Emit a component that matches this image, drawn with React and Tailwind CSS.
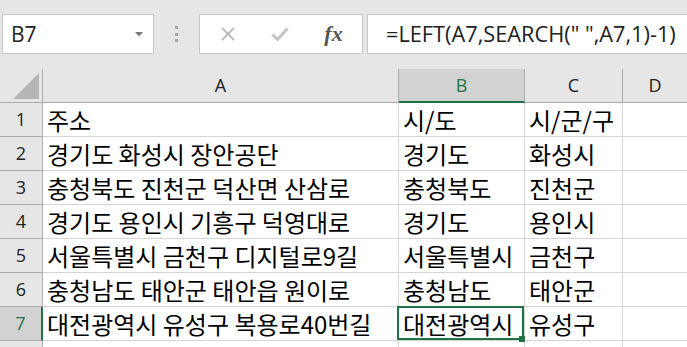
import React from "react";

const rows = [
  ["주소", "시/도", "시/군/구"],
  ["경기도 화성시 장안공단", "경기도", "화성시"],
  ["충청북도 진천군 덕산면 산삼로", "충청북도", "진천군"],
  ["경기도 용인시 기흥구 덕영대로", "경기도", "용인시"],
  ["서울특별시 금천구 디지털로9길", "서울특별시", "금천구"],
  ["충청남도 태안군 태안읍 원이로", "충청남도", "태안군"],
  ["대전광역시 유성구 복용로40번길", "대전광역시", "유성구"],
  ["", "", ""],
];

const cellFont = { fontFamily: '"Noto Sans CJK KR", "Noto Sans", sans-serif' };
const uiFont = { fontFamily: '"Open Sans", "Liberation Sans", sans-serif' };

export default function App() {
  return (
    <div className="w-[687px] h-[347px] overflow-hidden bg-[#e6e6e6] select-none">
      {/* formula bar */}
      <div className="h-[69px] flex items-start pt-[14px] pl-[2px]">
        <div className="w-[152px] h-[40px] bg-white border border-[#c6c6c6] flex items-center pl-[8px] pr-[10px]">
          <span className="flex-1 text-[21px] text-[#222] leading-none" style={uiFont}>B7</span>
          <svg width="8" height="5" viewBox="0 0 8 5"><path d="M0 0h8L4 4.5z" fill="#7a7a7a" /></svg>
        </div>
        <div className="w-[45px] h-[40px] flex flex-col items-center justify-center gap-[3.5px]">
          <div className="w-[3px] h-[3px] bg-[#a6a6a6]" />
          <div className="w-[3px] h-[3px] bg-[#a6a6a6]" />
          <div className="w-[3px] h-[3px] bg-[#a6a6a6]" />
        </div>
        <div className="w-[164px] h-[40px] bg-white border border-[#c6c6c6] flex items-center">
          <div className="w-[55px] flex justify-center pl-[1px]">
            <svg width="16" height="16" viewBox="0 0 16 16"><path d="M2 2L14 14M14 2L2 14" stroke="#bcbcbc" strokeWidth="2" /></svg>
          </div>
          <div className="w-[50px] flex justify-center">
            <svg width="18" height="14" viewBox="0 0 18 14"><path d="M1.5 7.5L6.5 12.5L16.5 1.5" stroke="#c4c4c4" strokeWidth="3" fill="none" /></svg>
          </div>
          <div className="w-[57px] flex justify-center">
            <span className="italic text-[22px] leading-none text-[#555]" style={{ fontFamily: '"Liberation Serif", serif', fontWeight: 600 }}>fx</span>
          </div>
        </div>
        <div className="ml-[4px] flex-1 h-[40px] bg-white border border-[#c6c6c6] border-r-0 flex items-center pl-[18px]">
          <span className="text-[21.75px] text-[#222] leading-none whitespace-nowrap" style={uiFont}>=LEFT(A7,SEARCH(" ",A7,1)-1)</span>
        </div>
      </div>

      {/* column headers */}
      <div className="flex h-[34px]" style={uiFont}>
        <div className="w-[43px] shrink-0 border-r border-b border-[#ababab] relative">
          <svg className="absolute left-[13px] top-[4px]" width="26" height="26" viewBox="0 0 26 26"><path d="M26 0V26H0z" fill="#b5b5b5" /></svg>
        </div>
        <div className="w-[356px] shrink-0 border-r border-b border-[#ababab] flex items-center justify-center text-[18px] text-[#222]">A</div>
        <div className="w-[126px] shrink-0 border-r border-[#ababab] border-b-2 border-b-[#217346] bg-[#d2d2d2] flex items-center justify-center text-[18px] text-[#217346]">B</div>
        <div className="w-[98px] shrink-0 border-r border-b border-[#ababab] flex items-center justify-center text-[18px] text-[#222]">C</div>
        <div className="flex-1 border-b border-[#ababab] flex items-center justify-center text-[18px] text-[#222]">D</div>
      </div>

      {/* rows */}
      {rows.map((r, i) => {
        const sel = i === 6;
        return (
          <div key={i} className={sel ? "flex h-[34px] relative z-10" : "flex h-[34px]"}>
            <div
              className={
                sel
                  ? "w-[43px] shrink-0 border-r-2 border-r-[#217346] border-b border-b-[#ababab] bg-[#d2d2d2] flex items-center justify-center text-[18px] text-[#217346]"
                  : "w-[43px] shrink-0 border-r border-b border-[#ababab] flex items-center justify-center text-[18px] text-[#222]"
              }
              style={uiFont}
            >
              {i < 7 ? i + 1 : ""}
            </div>
            <div className="w-[356px] shrink-0 bg-white border-r border-b border-[#d4d4d4] flex items-center pl-[4px] text-[24px] text-black whitespace-nowrap overflow-visible" style={cellFont}>{r[0]}</div>
            <div className={sel ? "w-[126px] shrink-0 bg-white border-r border-b border-[#d4d4d4] flex items-center pl-[4px] text-[24px] text-black whitespace-nowrap relative z-10" : "w-[126px] shrink-0 bg-white border-r border-b border-[#d4d4d4] flex items-center pl-[4px] text-[24px] text-black whitespace-nowrap"} style={cellFont}>
              {r[1]}
              {sel && (
                <>
                  <div className="absolute left-[-2px] top-[-1px] right-0 bottom-0 border-2 border-[#217346]" />
                  <div className="absolute right-[-1px] bottom-[-2px] w-[6px] h-[6px] bg-[#217346]" />
                </>
              )}
            </div>
            <div className="w-[98px] shrink-0 bg-white border-r border-b border-[#d4d4d4] flex items-center pl-[4px] text-[24px] text-black whitespace-nowrap" style={cellFont}>{r[2]}</div>
            <div className="flex-1 bg-white border-b border-[#d4d4d4]" />
          </div>
        );
      })}
    </div>
  );
}
